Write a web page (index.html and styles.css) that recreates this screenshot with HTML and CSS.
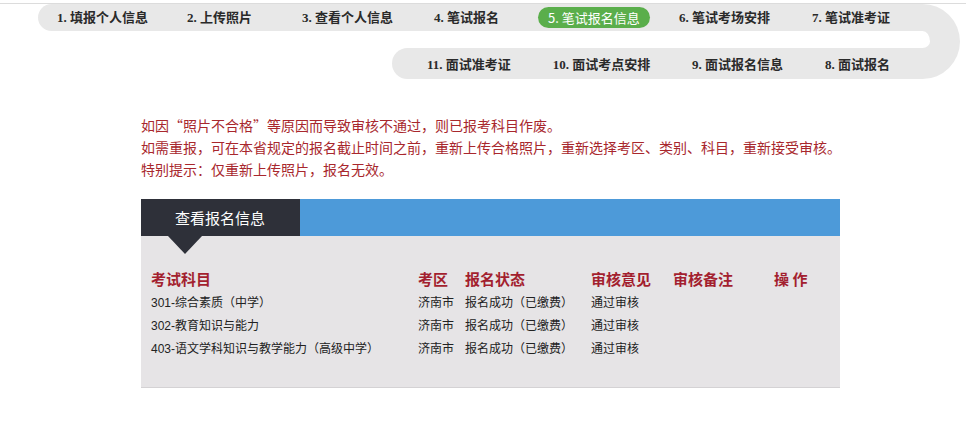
FILE: index.html
```html
<!DOCTYPE html>
<html lang="zh-CN">
  <head>
    <meta charset="UTF-8" />
    <meta name="viewport" content="width=device-width, initial-scale=1" />
    <title>查看报名信息</title>
    <link rel="stylesheet" href="styles.css">
  </head>
  <body>
    <div class="steps">
      <div class="track">
        <div class="rows">
          <ul class="step-row step-row-top">
            <li class="step">1. 填报个人信息</li>
            <li class="step">2. 上传照片</li>
            <li class="step">3. 查看个人信息</li>
            <li class="step">4. 笔试报名</li>
            <li class="step current">5. 笔试报名信息</li>
            <li class="step">6. 笔试考场安排</li>
            <li class="step">7. 笔试准考证</li>
          </ul>
          <div class="step-gap"></div>
          <ul class="step-row step-row-bottom">
            <li class="step">11. 面试准考证</li>
            <li class="step">10. 面试考点安排</li>
            <li class="step">9. 面试报名信息</li>
            <li class="step">8. 面试报名</li>
          </ul>
        </div>
        <div class="step-turn"></div>
      </div>
    </div>

    <div class="notice">
      <p>如因“照片不合格”等原因而导致审核不通过，则已报考科目作废。</p>
      <p>如需重报，可在本省规定的报名截止时间之前，重新上传合格照片，重新选择考区、类别、科目，重新接受审核。</p>
      <p>特别提示：仅重新上传照片，报名无效。</p>
    </div>

    <div class="panel">
      <div class="panel-head">
        <div class="panel-tab">查看报名信息</div>
      </div>
      <div class="panel-body">
        <table class="apply-table">
          <colgroup>
            <col class="col-subject" />
            <col class="col-area" />
            <col class="col-status" />
            <col class="col-review" />
            <col class="col-note" />
            <col />
          </colgroup>
          <thead>
            <tr>
              <th>考试科目</th>
              <th>考区</th>
              <th>报名状态</th>
              <th>审核意见</th>
              <th>审核备注</th>
              <th>操 作</th>
            </tr>
          </thead>
          <tbody>
            <tr>
              <td>301-综合素质（中学）</td>
              <td>济南市</td>
              <td>报名成功（已缴费）</td>
              <td>通过审核</td>
              <td></td>
              <td></td>
            </tr>
            <tr>
              <td>302-教育知识与能力</td>
              <td>济南市</td>
              <td>报名成功（已缴费）</td>
              <td>通过审核</td>
              <td></td>
              <td></td>
            </tr>
            <tr>
              <td>403-语文学科知识与教学能力（高级中学）</td>
              <td>济南市</td>
              <td>报名成功（已缴费）</td>
              <td>通过审核</td>
              <td></td>
              <td></td>
            </tr>
          </tbody>
        </table>
      </div>
    </div>
  </body>
</html>
```

FILE: styles.css
```css
:root {
  --track: #e8e8e8;
  --green: #5aae4b;
  --red: #a8272d;
  --head-red: #a31f2f;
  --dark: #2e3039;
  --blue: #4d9ad9;
  --panel: #e6e4e6;
}
body {
  margin: 0;
  background: #fff;
  font-family: "Liberation Sans", "Noto Sans CJK SC", sans-serif;
  color: #222;
}
ul {
  list-style: none;
  margin: 0;
  padding: 0;
}

/* step track */
.steps {
  margin-top: 3px;
  width: 966px;
  border-top: 1px solid #dcdcdc;
}
.track {
  display: flex;
}
.rows {
  width: 915px;
  display: flex;
  flex-direction: column;
}
.step-row {
  align-items: center;
  background: var(--track);
}
.step-row-top {
  display: grid;
  grid-template-columns: 130px 115px 132px 104px 141px 133px auto;
  justify-items: start;
  height: 27px;
  margin-left: 38px;
  padding: 0 0 0 19px;
  border-radius: 14px 0 0 14px;
}
.step-row-bottom {
  display: flex;
  justify-content: space-between;
  height: 31px;
  margin-left: 392px;
  padding: 2px 25px 0 35px;
  box-sizing: border-box;
  border-radius: 16px 0 0 16px;
}
.step-gap {
  height: 17px;
}
.step-turn {
  width: 15px;
  height: 17px;
  border-style: solid;
  border-color: var(--track);
  border-width: 27px 30px 31px 0;
  border-radius: 0 38px 38px 0;
}
.step {
  font-family: "Liberation Serif", "Noto Sans CJK SC", serif;
  font-size: 13px;
  font-weight: 700;
  color: #2a2a2a;
  white-space: nowrap;
  line-height: 21px;
}
.step.current {
  background: var(--green);
  color: #fff;
  border-radius: 11px;
  padding: 0 10px;
  font-weight: 400;
  font-family: "Noto Sans CJK SC", sans-serif;
}

/* notice */
.notice {
  margin: 35px 0 0 141px;
  color: var(--red);
  font-family: "Noto Sans CJK SC", sans-serif;
  font-size: 14px;
  line-height: 22px;
}
.notice p {
  margin: 0;
}

/* panel */
.panel {
  margin: 19px 0 0 141px;
  width: 699px;
}
.panel-head {
  height: 37px;
  background: var(--blue);
  display: flex;
}
.panel-tab {
  position: relative;
  width: 159px;
  box-sizing: border-box;
  padding-left: 34px;
  background: var(--dark);
  color: #fff;
  font-family: "Noto Sans CJK SC", sans-serif;
  font-size: 15px;
  line-height: 37px;
}
.panel-tab::after {
  content: "";
  position: absolute;
  left: 27px;
  top: 37px;
  border-top: 18px solid var(--dark);
  border-left: 17px solid transparent;
  border-right: 17px solid transparent;
}
.panel-body {
  background: var(--panel);
  border-bottom: 1px solid #d4d2d4;
  padding: 31px 0 28px 10px;
}
.apply-table {
  border-collapse: collapse;
  table-layout: fixed;
  width: 689px;
}
.col-subject {
  width: 267px;
}
.col-area {
  width: 47px;
}
.col-status {
  width: 126px;
}
.col-review {
  width: 82px;
}
.col-note {
  width: 101px;
}
.apply-table th,
.apply-table td {
  padding: 0;
  text-align: left;
  height: 23px;
  white-space: nowrap;
}
.apply-table th {
  color: var(--head-red);
  font-family: "Noto Sans CJK SC", sans-serif;
  font-size: 15px;
  font-weight: 700;
}
.apply-table td {
  font-size: 12px;
  color: #222;
}
```
